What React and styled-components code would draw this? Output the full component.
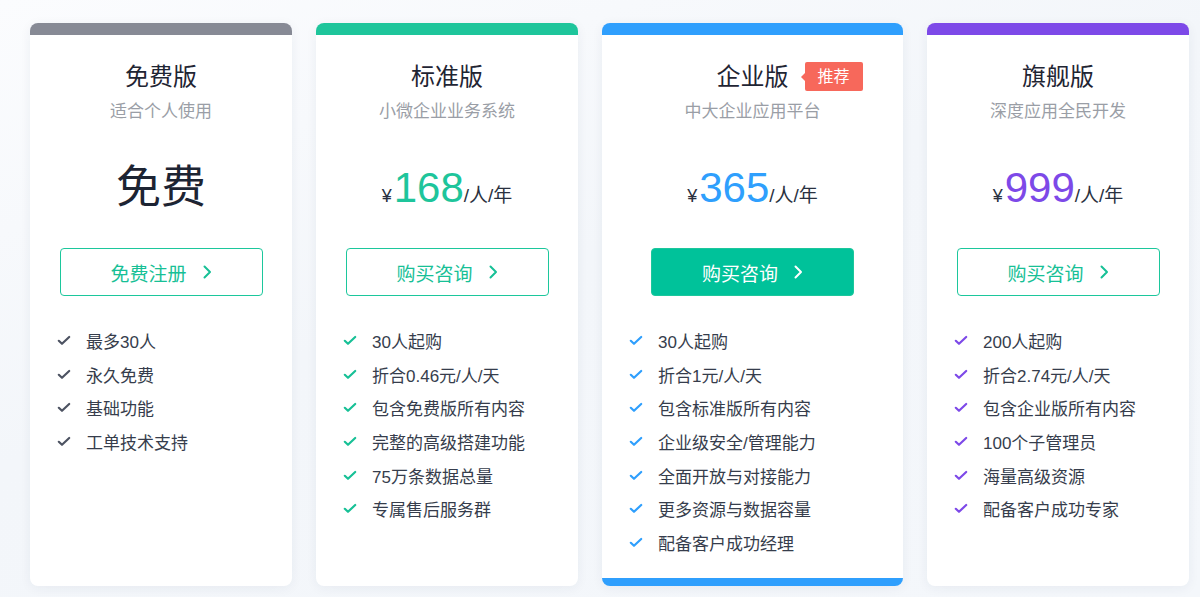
import React from "react";
import styled, { createGlobalStyle } from "styled-components";

const Global = createGlobalStyle`
  html, body { margin: 0; padding: 0; }
  body {
    font-family: "Liberation Sans", "Noto Sans CJK SC", sans-serif;
    background: #f3f6fa;
  }
`;

const Page = styled.div`
  width: 1200px;
  height: 597px;
  box-sizing: border-box;
  padding: 23px 0 0 30px;
  display: flex;
  align-items: flex-start;
  gap: 24px;
  background: linear-gradient(160deg, #fbfcfe 0%, #f3f6fa 45%, #f4f7fb 100%);
  overflow: hidden;
`;

const Card = styled.div`
  width: ${(p) => (p.$wide ? 301 : 262)}px;
  height: 563px;
  box-sizing: border-box;
  background: #fff;
  border-radius: 8px;
  border-top: 12px solid ${(p) => p.$color};
  border-bottom: ${(p) => (p.$wide ? `8px solid ${p.$color}` : "none")};
  box-shadow: 0 2px 12px rgba(30, 50, 90, 0.06);
  display: flex;
  flex-direction: column;
  align-items: center;
  padding-top: 26px;
`;

const TitleWrap = styled.div`
  position: relative;
  display: inline-block;
`;

const Title = styled.div`
  font-size: 24px;
  line-height: 32px;
  color: #1f2533;
`;

const Badge = styled.span`
  position: absolute;
  left: calc(100% + 16px);
  top: 1px;
  width: 58px;
  height: 29px;
  border-radius: 2px;
  background: #f7685b;
  color: #fff;
  font-size: 16px;
  line-height: 29px;
  text-align: center;
  white-space: nowrap;
  &::before {
    content: "";
    position: absolute;
    left: -4px;
    top: 50%;
    margin-top: -4px;
    border-style: solid;
    border-width: 4px 4px 4px 0;
    border-color: transparent #f7685b transparent transparent;
  }
`;

const Subtitle = styled.div`
  margin-top: 7px;
  font-size: 17px;
  line-height: 24px;
  color: #9a9ea6;
`;

const PriceRow = styled.div`
  margin-top: 34px;
  height: 60px;
  line-height: 60px;
  display: flex;
  align-items: baseline;
  justify-content: center;
  color: #2a3140;
  white-space: nowrap;
`;

const Yen = styled.span`
  font-size: 18px;
  margin-right: 2px;
`;

const Amount = styled.span`
  font-size: 42px;
  color: ${(p) => p.$color};
`;

const Unit = styled.span`
  font-size: 19px;
`;

const FreeText = styled.span`
  font-size: 45px;
  color: #1d2433;
`;

const Button = styled.button`
  margin-top: 30px;
  width: 203px;
  height: 48px;
  box-sizing: border-box;
  border-radius: 4px;
  border: 1px solid #1cc79c;
  background: ${(p) => (p.$filled ? "#00c29a" : "#fff")};
  color: ${(p) => (p.$filled ? "#fff" : "#17c096")};
  font-family: inherit;
  font-size: 19px;
  display: flex;
  align-items: center;
  justify-content: center;
  gap: 16px;
  padding: 0;
  cursor: pointer;
`;

const List = styled.ul`
  list-style: none;
  margin: 28px 0 0;
  padding: 0 0 0 27px;
  align-self: stretch;
`;

const Item = styled.li`
  display: flex;
  align-items: center;
  height: 33.6px;
  font-size: 17px;
  color: #363d4c;
  white-space: nowrap;
`;

const CheckBox = styled.span`
  width: 14px;
  margin-right: 15px;
  display: flex;
  align-items: center;
`;

const Check = ({ color }) => (
  <svg width="14" height="11" viewBox="0 0 14 11" fill="none">
    <path d="M1.8 5.8 L5 8.8 L12.2 2" stroke={color} strokeWidth="2.2" strokeLinecap="round" strokeLinejoin="round" />
  </svg>
);

const Chevron = () => (
  <svg width="9" height="14" viewBox="0 0 9 14" fill="none">
    <path d="M1.5 1.5 L7 7 L1.5 12.5" stroke="currentColor" strokeWidth="2" strokeLinecap="round" strokeLinejoin="round" />
  </svg>
);

const plans = [
  {
    name: "免费版",
    sub: "适合个人使用",
    color: "#878a95",
    check: "#4d5362",
    free: true,
    btn: "免费注册",
    features: ["最多30人", "永久免费", "基础功能", "工单技术支持"],
  },
  {
    name: "标准版",
    sub: "小微企业业务系统",
    color: "#1ec59b",
    check: "#17c096",
    price: "168",
    btn: "购买咨询",
    features: ["30人起购", "折合0.46元/人/天", "包含免费版所有内容", "完整的高级搭建功能", "75万条数据总量", "专属售后服务群"],
  },
  {
    name: "企业版",
    sub: "中大企业应用平台",
    color: "#2f9ffd",
    check: "#2f9ffd",
    price: "365",
    btn: "购买咨询",
    wide: true,
    badge: "推荐",
    filled: true,
    features: ["30人起购", "折合1元/人/天", "包含标准版所有内容", "企业级安全/管理能力", "全面开放与对接能力", "更多资源与数据容量", "配备客户成功经理"],
  },
  {
    name: "旗舰版",
    sub: "深度应用全民开发",
    color: "#7d49e8",
    check: "#7d49e8",
    price: "999",
    btn: "购买咨询",
    features: ["200人起购", "折合2.74元/人/天", "包含企业版所有内容", "100个子管理员", "海量高级资源", "配备客户成功专家"],
  },
];

export default function App() {
  return (
    <>
      <Global />
      <Page>
        {plans.map((p) => (
          <Card key={p.name} $color={p.color} $wide={p.wide}>
            <TitleWrap>
              <Title>{p.name}</Title>
              {p.badge && <Badge>{p.badge}</Badge>}
            </TitleWrap>
            <Subtitle>{p.sub}</Subtitle>
            <PriceRow>
              {p.free ? (
                <FreeText>免费</FreeText>
              ) : (
                <>
                  <Yen>¥</Yen>
                  <Amount $color={p.color}>{p.price}</Amount>
                  <Unit>/人/年</Unit>
                </>
              )}
            </PriceRow>
            <Button $filled={p.filled}>
              <span>{p.btn}</span>
              <Chevron />
            </Button>
            <List>
              {p.features.map((f) => (
                <Item key={f}>
                  <CheckBox>
                    <Check color={p.check} />
                  </CheckBox>
                  {f}
                </Item>
              ))}
            </List>
          </Card>
        ))}
      </Page>
    </>
  );
}
